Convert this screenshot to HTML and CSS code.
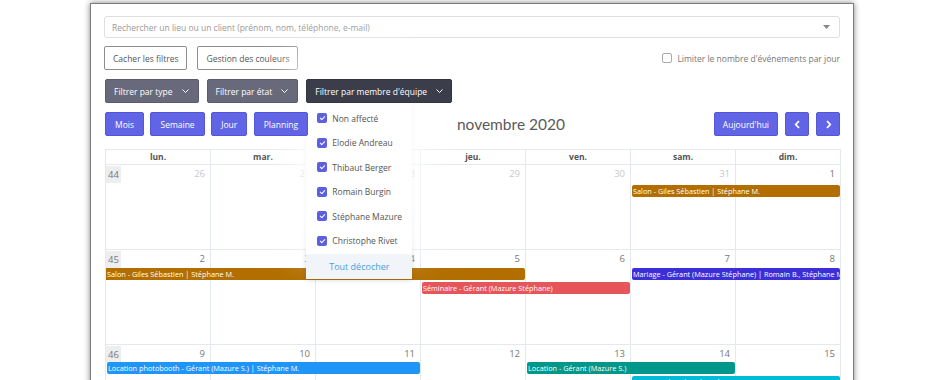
FILE: index.html
```html
<!DOCTYPE html>
<html lang="fr">
<head>
    <meta charset="UTF-8">
    <title>Planning</title>
    <link rel="stylesheet" href="styles.css">
</head>
<body>
<div class="fenetre">
    <div class="recherche">
        <span>Rechercher un lieu ou un client (prénom, nom, téléphone, e-mail)</span>
        <svg width="7" height="4" viewBox="0 0 7 4"><path d="M0 0h7L3.5 4z" fill="#888"/></svg>
    </div>

    <div class="ligne">
        <button class="btn-contour">Cacher les filtres</button>
        <button class="btn-contour">Gestion des couleurs</button>
        <label class="limiter"><span class="case-vide"></span>Limiter le nombre d'événements par jour</label>
    </div>

    <div class="ligne filtres">
        <button class="btn-filtre">Filtrer par type <svg width="7" height="4" viewBox="0 0 7 4"><path d="M.5.5l3 3 3-3" fill="none" stroke="#fff" stroke-width="1"/></svg></button>
        <button class="btn-filtre">Filtrer par état <svg width="7" height="4" viewBox="0 0 7 4"><path d="M.5.5l3 3 3-3" fill="none" stroke="#fff" stroke-width="1"/></svg></button>
        <div class="menu-membre">
            <button class="btn-filtre actif">Filtrer par membre d'équipe <svg width="7" height="4" viewBox="0 0 7 4"><path d="M.5.5l3 3 3-3" fill="none" stroke="#fff" stroke-width="1"/></svg></button>
            <div class="dropdown">
                <div class="choix"><span class="coche"></span>Non affecté</div>
                <div class="choix"><span class="coche"></span>Elodie Andreau</div>
                <div class="choix"><span class="coche"></span>Thibaut Berger</div>
                <div class="choix"><span class="coche"></span>Romain Burgin</div>
                <div class="choix"><span class="coche"></span>Stéphane Mazure</div>
                <div class="choix"><span class="coche"></span>Christophe Rivet</div>
                <div class="decocher">Tout décocher</div>
            </div>
        </div>
    </div>

    <div class="toolbar">
        <div class="vues">
            <button class="btn-bleu">Mois</button>
            <button class="btn-bleu">Semaine</button>
            <button class="btn-bleu">Jour</button>
            <button class="btn-bleu">Planning</button>
        </div>
        <h2 class="titre">novembre 2020</h2>
        <div class="nav">
            <button class="btn-bleu">Aujourd'hui</button>
            <button class="btn-bleu fleche"><svg width="7" height="9" viewBox="0 0 7 9"><path d="M5 1L1.8 4.5 5 8" fill="none" stroke="#fff" stroke-width="1.8"/></svg></button>
            <button class="btn-bleu fleche"><svg width="7" height="9" viewBox="0 0 7 9"><path d="M2 1l3.2 3.5L2 8" fill="none" stroke="#fff" stroke-width="1.8"/></svg></button>
        </div>
    </div>

    <div class="calendrier">
        <div class="entete">
            <div>lun.</div><div>mar.</div><div>mer.</div><div>jeu.</div><div>ven.</div><div>sam.</div><div>dim.</div>
        </div>

        <div class="semaine s1">
            <div class="jour autre">26</div>
            <div class="jour autre">27</div>
            <div class="jour autre">28</div>
            <div class="jour autre">29</div>
            <div class="jour autre">30</div>
            <div class="jour autre">31</div>
            <div class="jour">1</div>
            <span class="num-sem">44</span>
            <div class="evt brun" style="grid-column: 6 / 8; grid-row: 2;">Salon - Giles Sébastien | Stéphane M.</div>
        </div>

        <div class="semaine s2">
            <div class="jour">2</div>
            <div class="jour">3</div>
            <div class="jour">4</div>
            <div class="jour">5</div>
            <div class="jour">6</div>
            <div class="jour">7</div>
            <div class="jour">8</div>
            <span class="num-sem">45</span>
            <div class="evt brun debut" style="grid-column: 1 / 5; grid-row: 2;">Salon - Giles Sébastien | Stéphane M.</div>
            <div class="evt violet" style="grid-column: 6 / 8; grid-row: 2;">Mariage - Gérant (Mazure Stéphane) | Romain B., Stéphane M.</div>
            <div class="evt rouge" style="grid-column: 4 / 6; grid-row: 3;">Séminaire - Gérant (Mazure Stéphane)</div>
        </div>

        <div class="semaine s3">
            <div class="jour">9</div>
            <div class="jour">10</div>
            <div class="jour">11</div>
            <div class="jour">12</div>
            <div class="jour">13</div>
            <div class="jour">14</div>
            <div class="jour">15</div>
            <span class="num-sem">46</span>
            <div class="evt bleu" style="grid-column: 1 / 4; grid-row: 2;">Location photobooth - Gérant (Mazure S.) | Stéphane M.</div>
            <div class="evt vert" style="grid-column: 5 / 7; grid-row: 2;">Location - Gérant (Mazure S.)</div>
            <div class="evt cyan" style="grid-column: 6 / 8; grid-row: 3;">Location photobooth - Gérant (Mazure S.)</div>
        </div>
    </div>
</div>
</body>
</html>
```

FILE: styles.css
```css
body {
    margin: 0;
    background-color: white;
    font-family: "Open Sans", sans-serif;
    font-size: 8.5px;
    color: #555;
    overflow: hidden;
    height: 380px;
}

.fenetre {
    margin: 3px 0 0 90px;
    width: 736px;
    height: 420px;
    padding: 12px 13px 0 13px;
    border: 1px solid #7d7d7d;
    border-bottom: none;
    box-shadow: 0 0 6px rgba(0, 0, 0, 0.5);
    background-color: white;
}

button {
    font-family: "Open Sans", sans-serif;
    font-size: 8.5px;
    cursor: pointer;
}

.recherche {
    height: 20px;
    border: 1px solid #dcdfe3;
    border-radius: 3px;
    display: flex;
    align-items: center;
    justify-content: space-between;
    padding: 0 9px 0 7px;
    color: #9a9a9a;
}

.ligne {
    display: flex;
    align-items: center;
    gap: 10px;
    margin-top: 8px;
}
.filtres {
    margin-top: 9px;
    gap: 8px;
    padding-left: 1px;
    position: relative;
    z-index: 5;
}

.btn-contour {
    height: 24px;
    padding: 0 8px;
    background: white;
    border: 1px solid #8d8d8d;
    border-radius: 2px;
    color: #555;
}

.limiter {
    margin-left: auto;
    display: flex;
    align-items: center;
    gap: 5px;
    color: #777;
}
.case-vide {
    width: 8px;
    height: 8px;
    border: 1px solid #aaa;
    border-radius: 2px;
}

.btn-filtre {
    position: relative;
    z-index: 12;
    height: 24px;
    padding: 0 9px 0 8px;
    background-color: #686a7b;
    border: 1px solid #5a5c6c;
    border-radius: 2px;
    color: white;
    display: flex;
    align-items: center;
    gap: 9px;
}
.btn-filtre.actif {
    background-color: #3b3d4a;
    border-color: #33353f;
    padding: 0 8px 0 8px;
    gap: 9px;
}

.menu-membre {
    position: relative;
}
.dropdown {
    position: absolute;
    top: 24px;
    left: 0;
    width: 106px;
    padding-top: 3px;
    background: white;
    border-radius: 0 0 3px 3px;
    box-shadow: 0 -40px 32px 12px rgba(255, 255, 255, 0.9), 0 1px 5px rgba(0, 0, 0, 0.16);
    z-index: 10;
}
.choix {
    height: 24.5px;
    display: flex;
    align-items: center;
    gap: 5px;
    padding-left: 11px;
    color: #555;
}
.coche {
    width: 10px;
    height: 10px;
    border-radius: 2px;
    background-color: #5c5fe0;
    position: relative;
}
.coche::after {
    content: "";
    position: absolute;
    left: 3.5px;
    top: 2px;
    width: 2px;
    height: 4px;
    border: solid white;
    border-width: 0 1px 1px 0;
    transform: rotate(45deg);
}
.decocher {
    margin-top: 1px;
    height: 25px;
    line-height: 25px;
    text-align: center;
    background-color: #f1f4f8;
    color: #4a9fe0;
    font-size: 9px;
}

.toolbar {
    display: flex;
    align-items: center;
    margin-top: 9px;
    padding-left: 1px;
    position: relative;
    z-index: 6;
}
.vues {
    display: flex;
    gap: 6.5px;
}
.vues .btn-bleu {
    padding: 0 9px;
}
.nav {
    display: flex;
    gap: 7px;
}
.btn-bleu {
    height: 24px;
    padding: 0 8px;
    background-color: #6264e6;
    border: 1px solid #5558d6;
    border-radius: 2px;
    color: white;
}
.btn-bleu.fleche {
    width: 24px;
    padding: 0;
    display: flex;
    align-items: center;
    justify-content: center;
}
.titre {
    flex: 1;
    margin: 0;
    text-align: center;
    font-family: Lato, sans-serif;
    font-weight: 400;
    font-size: 15.5px;
    color: #5a5a5a;
}

.calendrier {
    margin-top: 13px;
    margin-left: 1px;
    width: 735px;
    border-top: 1px solid #e4e9f0;
    border-left: 1px solid #e4e9f0;
}
.entete {
    display: grid;
    grid-template-columns: repeat(7, 1fr);
}
.entete div {
    height: 14px;
    line-height: 14px;
    text-align: center;
    font-weight: bold;
    color: #555;
    border-right: 1px solid #e4e9f0;
    border-bottom: 1px solid #e4e9f0;
}

.semaine {
    display: grid;
    grid-template-columns: repeat(7, 1fr);
}
.s1 { height: 85px; grid-template-rows: 19px 13px 1fr; }
.s2 { height: 95px; grid-template-rows: 17px 14px 14px 1fr; }
.s3 { height: 95px; grid-template-rows: 16px 14px 14px 1fr; }

.jour {
    grid-row: 1 / -1;
    border-right: 1px solid #e4e9f0;
    border-bottom: 1px solid #e4e9f0;
    text-align: right;
    padding: 2px 5px 0 0;
    color: #777;
    font-size: 9.5px;
}
.semaine .jour:nth-child(1) { grid-column: 1; }
.semaine .jour:nth-child(2) { grid-column: 2; }
.semaine .jour:nth-child(3) { grid-column: 3; }
.semaine .jour:nth-child(4) { grid-column: 4; }
.semaine .jour:nth-child(5) { grid-column: 5; }
.semaine .jour:nth-child(6) { grid-column: 6; }
.semaine .jour:nth-child(7) { grid-column: 7; }
.jour.autre {
    color: #c9c9c9;
}

.num-sem {
    grid-column: 1;
    grid-row: 1;
    justify-self: start;
    align-self: start;
    margin-top: 1px;
    padding: 2px 2px;
    background-color: #eeeeee;
    color: #777;
    font-size: 9.5px;
}

.evt {
    align-self: center;
    margin: 0 1px;
    height: 12px;
    line-height: 12px;
    padding-left: 1px;
    border-radius: 2px;
    color: white;
    font-size: 7.3px;
    white-space: nowrap;
    overflow: hidden;
}
.evt.debut {
    margin-left: 0;
    border-radius: 0 2px 2px 0;
}
.brun { background-color: #b26f00; }
.violet { background-color: #3c2fd8; }
.rouge { background-color: #e5555a; }
.bleu { background-color: #1f95f8; }
.vert { background-color: #01978a; }
.cyan { background-color: #00bcd6; }
```
